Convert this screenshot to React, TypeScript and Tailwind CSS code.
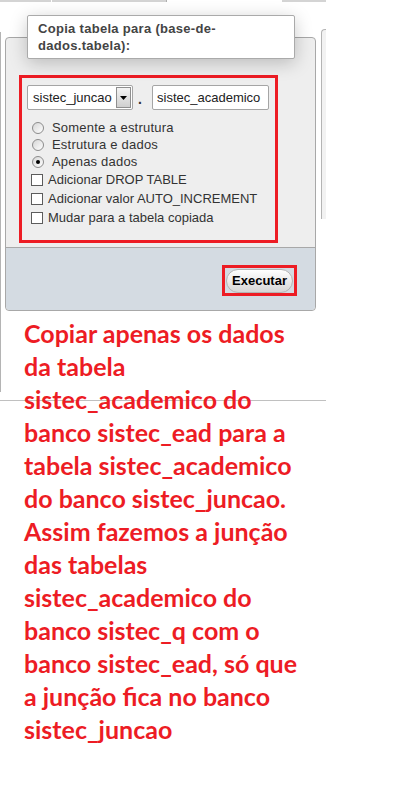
const RED = '#ed1c24';

const NOTE = [
  'Copiar apenas os dados',
  'da tabela',
  'sistec_academico do',
  'banco sistec_ead para a',
  'tabela sistec_academico',
  'do banco sistec_juncao.',
  'Assim fazemos a junção',
  'das tabelas',
  'sistec_academico do',
  'banco sistec_q com o',
  'banco sistec_ead, só que',
  'a junção fica no banco',
  'sistec_juncao',
];

function Radio({ checked }: { checked?: boolean }) {
  return (
    <span className="flex h-[12px] w-[12px] items-center justify-center rounded-full border border-[#8c8c8c] bg-gradient-to-br from-[#d6d6d6] to-white">
      {checked && <span className="h-[4px] w-[4px] rounded-full bg-black" />}
    </span>
  );
}

function Check() {
  return <span className="block h-[12px] w-[12px] border border-[#5c5c5c] bg-white" />;
}

export default function App() {
  return (
    <div
      className="relative h-[800px] w-[408px] overflow-hidden bg-white text-[13px] text-black"
      style={{ fontFamily: '"Liberation Sans", Arial, sans-serif' }}
    >
      {/* tab strip */}
      <div className="flex h-[2px] w-[326px]">
        <div className="w-[51px] bg-[#d4d4d4]" />
        <div className="w-[1px] bg-white" />
        <div className="w-[114px] bg-[#d4d4d4]" />
        <div className="w-[1px] bg-[#b0b0b0]" />
        <div className="w-[115px] bg-white" />
        <div className="w-[44px] bg-[#d4d4d4]" />
      </div>

      <div className="mt-[27px] flex items-start">
        <div className="mt-[3px] h-[360px] w-[316px] border-l border-[#b4b4b4] pl-[4px] pt-[5px]">
          {/* dialog panel */}
          <div className="w-[311px] rounded-[4px] border border-[#a8a8a8] bg-[#eeeeee]">
            <div className="h-[209px] pl-[13px] pt-[37px]">
              <div className="h-[168px] w-[259px] border-[3px] border-[#ed1c24] pl-[5px] pt-[7px]">
                <div className="flex items-center">
                  <div className="flex h-[25px] w-[106px] items-center rounded-[2px] border border-[#a5a5a5] bg-white">
                    <span className="flex-1 pl-[5px] text-[13px] text-[#222]">sistec_juncao</span>
                    <span className="mr-[1px] flex h-[21px] w-[15px] items-center justify-center border border-[#8f8f8f] bg-gradient-to-b from-[#f4f4f4] to-[#cfcfcf]">
                      <svg width="7" height="4" viewBox="0 0 7 4">
                        <path d="M0 0h7L3.5 4z" fill="#000" />
                      </svg>
                    </span>
                  </div>
                  <span className="w-[19px] pl-[5px] pt-[4px] text-[14px] font-bold text-[#333]">.</span>
                  <div className="flex h-[25px] w-[117px] items-center rounded-[2px] border border-[#a5a5a5] bg-white pl-[4px] text-[13px] text-[#222]">
                    sistec_academico
                  </div>
                </div>

                <div className="mt-[9px] flex flex-col pl-[5px] tracking-[0.2px] text-[#333]">
                  {['Somente a estrutura', 'Estrutura e dados', 'Apenas dados'].map((label, i) => (
                    <label key={label} className="flex h-[17px] items-center gap-[8px]">
                      <Radio checked={i === 2} />
                      <span>{label}</span>
                    </label>
                  ))}
                </div>
                <div className="flex flex-col pl-[4px] text-[#333]">
                  {['Adicionar DROP TABLE', 'Adicionar valor AUTO_INCREMENT', 'Mudar para a tabela copiada'].map(
                    (label) => (
                      <label key={label} className="flex h-[19px] items-center gap-[5px]">
                        <Check />
                        <span>{label}</span>
                      </label>
                    ),
                  )}
                </div>
              </div>
            </div>

            <div className="flex h-[63px] justify-end rounded-b-[4px] border-t border-[#a8a8a8] bg-[#d4dbe2] pr-[18px] pt-[17px]">
              <div className="flex h-[31px] w-[75px] items-center justify-center border-[3px] border-[#ed1c24]">
                <button className="h-[24px] w-[67px] rounded-full border border-[#b4b4b4] bg-gradient-to-b from-white to-[#d6d6d6] text-[13px] font-bold text-black">
                  Executar
                </button>
              </div>
            </div>
          </div>
        </div>

        {/* edge of neighbouring panel */}
        <div className="ml-[5px] h-[190px] w-[5px] rounded-tl-[4px] border-l border-t border-[#b4b4b4] bg-[#f2f2f2]" />
      </div>

      <div className="mt-[8px] h-px w-[326px] bg-[#c0c0c0]" />

      {/* tooltip */}
      <div className="absolute left-[27px] top-[15px] h-[44px] w-[268px] rounded-[2px] border border-[#aaaaaa] bg-white pl-[10px] pt-[4px] text-[13px] font-bold leading-[17px] tracking-[0.3px] text-[#444] shadow-[0_4px_18px_rgba(0,0,0,0.22)]">
        Copia tabela para (base-de-
        <br />
        dados.tabela):
      </div>

      {/* annotation */}
      <div
        className="absolute left-[24px] top-[317px] text-[25px] font-bold leading-[33px]"
        style={{ fontFamily: 'Lato, "Open Sans", sans-serif', color: RED }}
      >
        {NOTE.map((line, i) => (
          <span key={i} className="block whitespace-nowrap">
            {line}
          </span>
        ))}
      </div>
    </div>
  );
}
